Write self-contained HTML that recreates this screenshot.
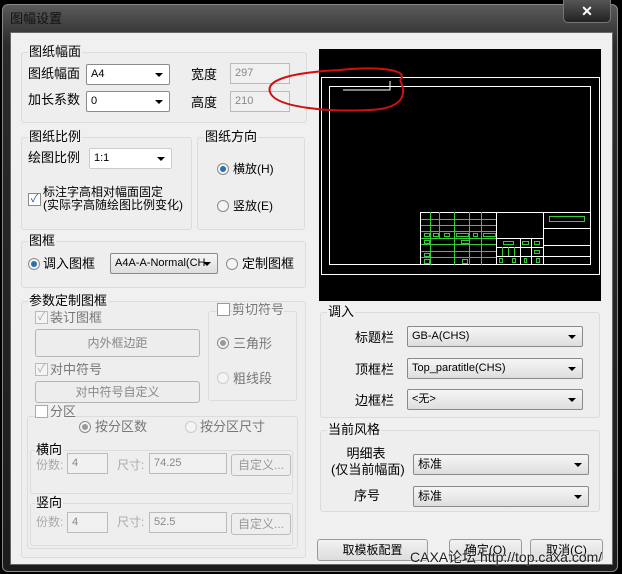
<!DOCTYPE html>
<html><head><meta charset="utf-8"><style>
*{box-sizing:border-box;margin:0;padding:0}
body{width:622px;height:574px;background:#000;position:relative;overflow:hidden;font-family:"Liberation Sans","Noto Sans CJK SC",sans-serif;font-size:12px;color:#000}
.a{position:absolute;white-space:nowrap;line-height:15px}
.frame{position:absolute;left:2px;top:4px;width:616px;height:568px;background:linear-gradient(#5a5a5a,#2a2a2a 40px,#1c1c1c);border:1px solid #888;border-radius:6px}
.client{position:absolute;left:10px;top:32px;width:603px;height:533px;background:#f0f0f0;border:1px solid #666}
.g{position:absolute;border:1px solid #dcdcdc;border-radius:3px;background:#eeeeee}
.gl{position:absolute;top:-9px;left:6px;background:#f0f0f0;padding:0 1px;font-size:13px;line-height:15px}
.cb{position:absolute;height:21px;border:1px solid #8a8a8a;border-radius:2px;background:linear-gradient(#f6f6f6,#dedede);font-size:11px;padding:3px 4px;line-height:13px}
.cb:after{content:"";position:absolute;right:6px;top:8px;border-left:4px solid transparent;border-right:4px solid transparent;border-top:4px solid #000}
.cbw{background:#fff}
.ed{position:absolute;height:21px;border:1px solid #bbb;background:#f0f0f0;color:#888;font-size:11px;padding:3px 4px;line-height:13px}
.btn{position:absolute;border:1px solid #9a9a9a;border-radius:3px;background:linear-gradient(#f2f2f2,#dcdcdc);text-align:center;font-size:12px}
.rd{position:absolute;width:12px;height:12px;border-radius:50%;border:1px solid #8a8a8a;background:#f4f4f4}
.rd.on:after{content:"";position:absolute;left:2px;top:2px;width:6px;height:6px;border-radius:50%;background:#2a6fb0}
.rd.dis.on:after{background:#999}
.ck{position:absolute;width:13px;height:13px;border:1px solid #8a8a8a;background:#fff;font-size:11px;line-height:11px;text-align:center;color:#3355aa}
.dis{color:#999}
.ck.dis{border-color:#bbb;color:#aaa;background:#f4f4f4}
</style></head><body>
<div class="frame"></div>
<div class="a" style="left:10px;top:11px;font-size:13px;color:#111">图幅设置</div>
<div class="a" style="left:563px;top:0;width:48px;height:23px;border:1px solid #777;border-top:none;border-radius:0 0 5px 5px;background:linear-gradient(#555,#222);color:#fff;font-weight:bold;text-align:center;font-size:14px;line-height:22px">✕</div>
<div class="client"></div>

<div class="g" style="left:21px;top:52px;width:286px;height:71px"><span class="gl">图纸幅面</span></div>
<div class="a" style="left:28px;top:66px;font-size:13px">图纸幅面</div>
<div class="cb cbw" style="left:86px;top:64px;width:84px">A4</div>
<div class="a" style="left:191px;top:67px;font-size:13px">宽度</div>
<div class="ed" style="left:230px;top:63px;width:60px">297</div>
<div class="a" style="left:28px;top:92px;font-size:13px">加长系数</div>
<div class="cb cbw" style="left:86px;top:91px;width:84px">0</div>
<div class="a" style="left:191px;top:95px;font-size:13px">高度</div>
<div class="ed" style="left:230px;top:91px;width:60px">210</div>

<div class="g" style="left:21px;top:137px;width:171px;height:93px"><span class="gl">图纸比例</span></div>
<div class="a" style="left:28px;top:150px;font-size:13px">绘图比例</div>
<div class="cb cbw" style="left:89px;top:148px;width:83px;border-color:#ccc">1:1</div>
<div class="ck" style="left:28px;top:193px">✓</div>
<div class="a" style="left:43px;top:186px;font-size:12px;line-height:13px">标注字高相对幅面固定<br>(实际字高随绘图比例变化)</div>

<div class="g" style="left:197px;top:137px;width:108px;height:93px"><span class="gl">图纸方向</span></div>
<div class="rd on" style="left:217px;top:163px"></div>
<div class="a" style="left:233px;top:162px">横放(H)</div>
<div class="rd" style="left:217px;top:200px"></div>
<div class="a" style="left:233px;top:199px">竖放(E)</div>

<div class="g" style="left:21px;top:241px;width:285px;height:47px"><span class="gl">图框</span></div>
<div class="rd on" style="left:28px;top:258px"></div>
<div class="a" style="left:43px;top:256px;font-size:13px">调入图框</div>
<div class="cb" style="left:110px;top:253px;width:108px">A4A-A-Normal(CH</div>
<div class="rd" style="left:226px;top:258px"></div>
<div class="a" style="left:242px;top:256px;font-size:13px">定制图框</div>

<div class="g" style="left:21px;top:301px;width:285px;height:257px"><span class="gl" style="left:6px;top:-9px">参数定制图框</span></div>
<div class="ck dis" style="left:35px;top:311px">✓</div>
<div class="a" style="left:50px;top:310px;font-size:13px;color:#777">装订图框</div>
<div class="btn" style="left:35px;top:329px;width:165px;height:28px;line-height:26px;color:#888;background:#ededed;border-color:#b5b5b5">内外框边距</div>
<div class="ck dis" style="left:35px;top:363px">✓</div>
<div class="a" style="left:50px;top:362px;font-size:13px;color:#777">对中符号</div>
<div class="btn" style="left:35px;top:381px;width:165px;height:22px;line-height:20px;color:#888;background:#ededed;border-color:#b5b5b5">对中符号自定义</div>
<div class="g" style="left:208px;top:311px;width:89px;height:90px"></div>
<div class="ck" style="left:217px;top:303px;background:#fff;border-color:#999"></div>
<div class="a" style="left:232px;top:302px;font-size:13px;color:#777;background:#f0f0f0">剪切符号</div>
<div class="rd dis on" style="left:217px;top:337px"></div>
<div class="a" style="left:233px;top:336px;color:#777;font-size:13px">三角形</div>
<div class="rd" style="left:217px;top:372px;border-color:#ccc"></div>
<div class="a" style="left:233px;top:371px;color:#777;font-size:13px">粗线段</div>

<div class="g" style="left:27px;top:416px;width:271px;height:133px"></div>
<div class="ck" style="left:35px;top:405px;border-color:#aaa"></div>
<div class="a" style="left:50px;top:404px;color:#777;font-size:13px;background:#f0f0f0">分区</div>
<div class="rd dis on" style="left:79px;top:421px"></div>
<div class="a" style="left:95px;top:419px;color:#777;font-size:13px">按分区数</div>
<div class="rd" style="left:185px;top:421px;border-color:#ccc"></div>
<div class="a" style="left:200px;top:419px;color:#777;font-size:13px">按分区尺寸</div>
<div class="g" style="left:30px;top:450px;width:263px;height:44px"><span class="gl" style="left:4px;color:#000">横向</span></div>
<div class="a" style="left:36px;top:458px;color:#aaa;font-size:12px">份数:</div>
<div class="ed" style="left:67px;top:453px;width:41px">4</div>
<div class="a" style="left:117px;top:458px;color:#aaa">尺寸:</div>
<div class="ed" style="left:149px;top:453px;width:78px">74.25</div>
<div class="btn" style="left:231px;top:454px;width:60px;height:22px;line-height:20px;color:#999;background:#eee;border-color:#bbb">自定义...</div>
<div class="g" style="left:30px;top:503px;width:263px;height:43px"><span class="gl" style="left:4px">竖向</span></div>
<div class="a" style="left:36px;top:515px;color:#aaa">份数:</div>
<div class="ed" style="left:67px;top:512px;width:41px">4</div>
<div class="a" style="left:117px;top:515px;color:#aaa">尺寸:</div>
<div class="ed" style="left:149px;top:512px;width:78px">52.5</div>
<div class="btn" style="left:231px;top:513px;width:60px;height:22px;line-height:20px;color:#999;background:#eee;border-color:#bbb">自定义...</div>

<svg class="a" style="left:268px;top:49px" width="333" height="252" viewBox="268 49 333 252">
<rect x="319" y="49" width="282" height="252" fill="#000"/>
<g fill="none" stroke="#fff" stroke-width="1">
<rect x="321.5" y="77.5" width="278" height="197"/>
<rect x="329.5" y="86.5" width="261" height="178"/>
<polyline points="343,90 390,90 390,81"/>
<rect x="420.5" y="212.5" width="170" height="52"/>
<line x1="496.5" y1="212" x2="496.5" y2="265"/><line x1="543.5" y1="212" x2="543.5" y2="265"/>
<line x1="543" y1="228.5" x2="591" y2="228.5"/><line x1="543" y1="245.5" x2="591" y2="245.5"/><line x1="543" y1="256.5" x2="591" y2="256.5"/>
<line x1="496" y1="238.5" x2="543" y2="238.5"/><line x1="496" y1="247.5" x2="543" y2="247.5"/><line x1="496" y1="256.5" x2="543" y2="256.5"/>
<line x1="520.5" y1="238" x2="520.5" y2="265"/><line x1="531.5" y1="238" x2="531.5" y2="265"/>
</g>
<g fill="none" stroke="#3c3" stroke-width="1">
<line x1="421" y1="219.5" x2="496" y2="219.5"/><line x1="421" y1="225.5" x2="496" y2="225.5"/><line x1="421" y1="231.5" x2="496" y2="231.5"/><line x1="421" y1="238.5" x2="496" y2="238.5"/><line x1="421" y1="244.5" x2="496" y2="244.5"/><line x1="421" y1="251.5" x2="496" y2="251.5"/><line x1="421" y1="257.5" x2="496" y2="257.5"/>
<line x1="430.5" y1="212" x2="430.5" y2="265"/><line x1="439.5" y1="212" x2="439.5" y2="238"/><line x1="454.5" y1="212" x2="454.5" y2="265"/><line x1="469.5" y1="212" x2="469.5" y2="265"/><line x1="481.5" y1="212" x2="481.5" y2="265"/>
<rect x="549.5" y="216.5" width="35" height="5"/>
<rect x="424.5" y="233.5" width="5" height="3"/><rect x="433.5" y="233.5" width="5" height="3"/><rect x="444.5" y="233.5" width="5" height="3"/><rect x="456.5" y="233.5" width="12" height="3"/><rect x="473.5" y="233.5" width="4" height="3"/><rect x="483.5" y="233.5" width="12" height="3"/>
<rect x="424.5" y="240.5" width="5" height="3"/><rect x="461.5" y="240.5" width="8" height="3"/><rect x="424.5" y="253.5" width="5" height="3"/><rect x="424.5" y="259.5" width="5" height="4"/><rect x="462.5" y="259.5" width="5" height="4"/>
<rect x="503.5" y="241.5" width="10" height="3"/><rect x="522.5" y="241.5" width="6" height="3"/><rect x="534.5" y="241.5" width="5" height="3"/><rect x="534.5" y="250.5" width="5" height="3"/>
<line x1="502.5" y1="247" x2="502.5" y2="256"/><line x1="508.5" y1="247" x2="508.5" y2="256"/><line x1="514.5" y1="247" x2="514.5" y2="256"/>
<rect x="499.5" y="258.5" width="3" height="4"/><rect x="512.5" y="258.5" width="3" height="4"/><rect x="524.5" y="258.5" width="2" height="4"/><rect x="536.5" y="258.5" width="3" height="4"/>
</g>
<path d="M400,80 C410,70 380,66 340,70 C300,72 265,78 270,92 C275,108 330,112 370,110 C395,109 410,100 400,80" fill="none" stroke="#d01010" stroke-width="2"/>
</svg>

<div class="g" style="left:320px;top:312px;width:280px;height:106px"><span class="gl">调入</span></div>
<div class="a" style="left:355px;top:330px;font-size:13px">标题栏</div>
<div class="cb" style="left:407px;top:326px;width:176px">GB-A(CHS)</div>
<div class="a" style="left:355px;top:362px;font-size:13px">顶框栏</div>
<div class="cb" style="left:407px;top:358px;width:176px">Top_paratitle(CHS)</div>
<div class="a" style="left:355px;top:393px;font-size:13px">边框栏</div>
<div class="cb" style="left:407px;top:389px;width:176px">&lt;无&gt;</div>
<div class="g" style="left:320px;top:430px;width:280px;height:82px"><span class="gl">当前风格</span></div>
<div class="a" style="left:331px;top:446px;font-size:13px;text-align:center;line-height:16px;width:70px">明细表<br>(仅当前幅面)</div>
<div class="cb" style="left:413px;top:454px;width:176px;font-size:12px">标准</div>
<div class="a" style="left:354px;top:488px;font-size:13px">序号</div>
<div class="cb" style="left:413px;top:486px;width:176px;font-size:12px">标准</div>

<div class="btn" style="left:317px;top:539px;width:111px;height:22px;line-height:20px">取模板配置</div>
<div class="btn" style="left:449px;top:539px;width:73px;height:22px;line-height:20px">确定(O)</div>
<div class="btn" style="left:530px;top:539px;width:73px;height:22px;line-height:20px">取消(C)</div>
<div class="a" style="left:410px;top:550px;font-size:14px;color:#222;text-shadow:0 0 2px #fff">CAXA论坛 http://top.caxa.com/</div>
</body></html>
